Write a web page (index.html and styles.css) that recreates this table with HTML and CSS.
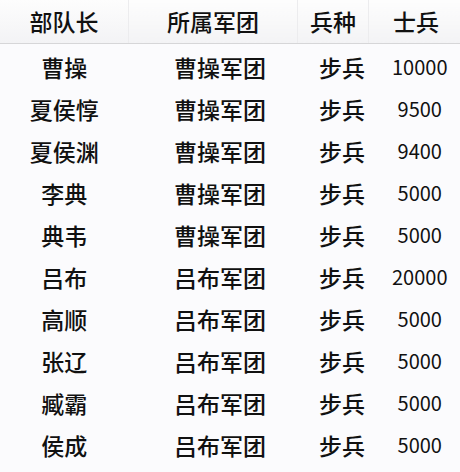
FILE: index.html
```html
<!DOCTYPE html>
<html lang="zh">
<head>
<meta charset="utf-8">
<link rel="stylesheet" href="styles.css">
</head>
<body>
<table class="grid">
  <thead>
    <tr><th class="c1">部队长</th><th class="c2">所属军团</th><th class="c3">兵种</th><th class="c4">士兵</th></tr>
  </thead>
  <tbody>
    <tr><td class="c1">曹操</td><td class="c2">曹操军团</td><td class="c3">步兵</td><td class="c4 num">10000</td></tr>
    <tr><td class="c1">夏侯惇</td><td class="c2">曹操军团</td><td class="c3">步兵</td><td class="c4 num">9500</td></tr>
    <tr><td class="c1">夏侯渊</td><td class="c2">曹操军团</td><td class="c3">步兵</td><td class="c4 num">9400</td></tr>
    <tr><td class="c1">李典</td><td class="c2">曹操军团</td><td class="c3">步兵</td><td class="c4 num">5000</td></tr>
    <tr><td class="c1">典韦</td><td class="c2">曹操军团</td><td class="c3">步兵</td><td class="c4 num">5000</td></tr>
    <tr><td class="c1">吕布</td><td class="c2">吕布军团</td><td class="c3">步兵</td><td class="c4 num">20000</td></tr>
    <tr><td class="c1">高顺</td><td class="c2">吕布军团</td><td class="c3">步兵</td><td class="c4 num">5000</td></tr>
    <tr><td class="c1">张辽</td><td class="c2">吕布军团</td><td class="c3">步兵</td><td class="c4 num">5000</td></tr>
    <tr><td class="c1">臧霸</td><td class="c2">吕布军团</td><td class="c3">步兵</td><td class="c4 num">5000</td></tr>
    <tr><td class="c1">侯成</td><td class="c2">吕布军团</td><td class="c3">步兵</td><td class="c4 num">5000</td></tr>
  </tbody>
</table>
</body>
</html>
```
FILE: styles.css
```css
html, body {
  margin: 0;
  padding: 0;
  background: #fbfbfd;
}
body {
  width: 460px;
  height: 472px;
  overflow: hidden;
  font-family: "Noto Sans CJK SC", "Noto Sans", sans-serif;
  color: #111;
}
.grid {
  width: 460px;
  border-collapse: collapse;
  table-layout: fixed;
}
.grid th {
  height: 43px;
  padding: 0;
  font-size: 23px;
  font-weight: 500;
  background: linear-gradient(#fdfdfd, #f3f3f5);
  border-bottom: 1px solid #d6d6d8;
  border-right: 1px solid #ececee;
  text-align: center;
  line-height: 43px;
}
.grid th:last-child { border-right: none; }
.grid tbody tr:first-child td { padding-top: 2px; }
.grid td {
  height: 42px;
  padding: 0;
  font-size: 23px;
  font-weight: 500;
  text-align: center;
  line-height: 42px;
}
.c1 { width: 128px; }
.c2 { width: 168px; }
.c3 { width: 70px; }
.c4 { width: 94px; }
td.c2 { padding-left: 14px !important; }
td.c3 { padding-left: 18px !important; }
td.c4 { padding-left: 8px !important; }
td.num {
  font-size: 20px;
  font-weight: 400;
}
```
